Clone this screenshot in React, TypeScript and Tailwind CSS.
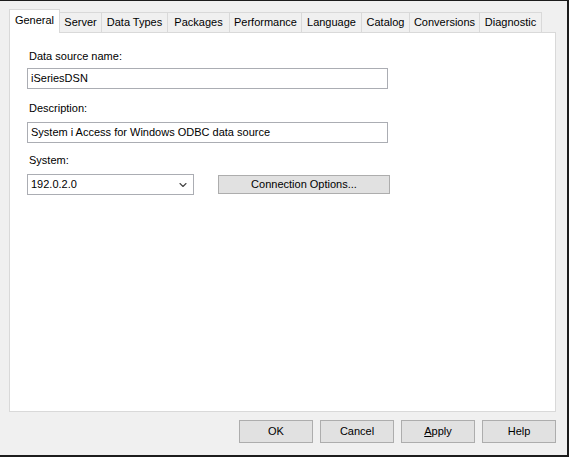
import { ChevronDown } from 'lucide-react';

const tabs = [
  { label: 'Server', w: 'w-[42px]' },
  { label: 'Data Types', w: 'w-[66px]' },
  { label: 'Packages', w: 'w-[62px]' },
  { label: 'Performance', w: 'w-[72px]' },
  { label: 'Language', w: 'w-[60px]' },
  { label: 'Catalog', w: 'w-[48px]' },
  { label: 'Conversions', w: 'w-[70px]' },
  { label: 'Diagnostic', w: 'w-[62px]' },
];

function Field({ value }: { value: string }) {
  return (
    <div className="flex h-[21px] w-[361px] items-center border border-[#abadb3] bg-white pl-[3px] text-black">
      {value}
    </div>
  );
}

function DlgButton({ children }: { children: React.ReactNode }) {
  return (
    <button className="flex h-[23px] w-[74px] items-center justify-center border border-[#adadad] bg-[#e1e1e1] text-black">
      {children}
    </button>
  );
}

export default function App() {
  return (
    <div className="h-[457px] w-[569px] border-t border-r-2 border-b-2 border-[#1c1c1c] bg-[#f0f0f0] font-['Liberation_Sans',Arial,sans-serif] text-[11px] leading-[13px] text-black">
      <div className="pl-[9px] pt-[8px]">
        {/* tab strip */}
        <div className="flex h-[23px] items-end">
          <div className="relative z-10 -mb-px flex h-[24px] w-[51px] items-center justify-center border border-b-0 border-[#d9d9d9] bg-white pb-[2px]">
            General
          </div>
          {tabs.map((t) => (
            <div
              key={t.label}
              className={`flex h-[20px] ${t.w} items-center justify-center border border-l-0 border-b-0 border-[#d9d9d9] bg-[#f0f0f0]`}
            >
              {t.label}
            </div>
          ))}
        </div>

        {/* page */}
        <div className="flex h-[380px] w-[547px] flex-col border border-[#d9d9d9] bg-white pl-[17px] pt-[17px]">
          <div className="pl-[2px]">Data source name:</div>
          <div className="mt-[5px]">
            <Field value="iSeriesDSN" />
          </div>
          <div className="mt-[13px] pl-[2px]">Description:</div>
          <div className="mt-[7px]">
            <Field value="System i Access for Windows ODBC data source" />
          </div>
          <div className="mt-[11px] pl-[2px]">System:</div>
          <div className="mt-[7px] flex items-center">
            <div className="flex h-[21px] w-[167px] items-center justify-between border border-[#abadb3] bg-white pl-[3px] pr-[4px]">
              <span>192.0.2.0</span>
              <ChevronDown className="h-[12px] w-[12px] text-[#444]" strokeWidth={2.2} />
            </div>
            <button className="ml-[24px] flex h-[19px] w-[172px] items-center justify-center border border-[#adadad] bg-[#e1e1e1]">
              Connection Options...
            </button>
          </div>
        </div>
      </div>

      {/* dialog buttons */}
      <div className="mt-[8px] flex justify-end gap-[7px] pr-[11px]">
        <DlgButton>OK</DlgButton>
        <DlgButton>Cancel</DlgButton>
        <DlgButton>
          <span>
            <span className="underline">A</span>pply
          </span>
        </DlgButton>
        <DlgButton>Help</DlgButton>
      </div>
    </div>
  );
}
